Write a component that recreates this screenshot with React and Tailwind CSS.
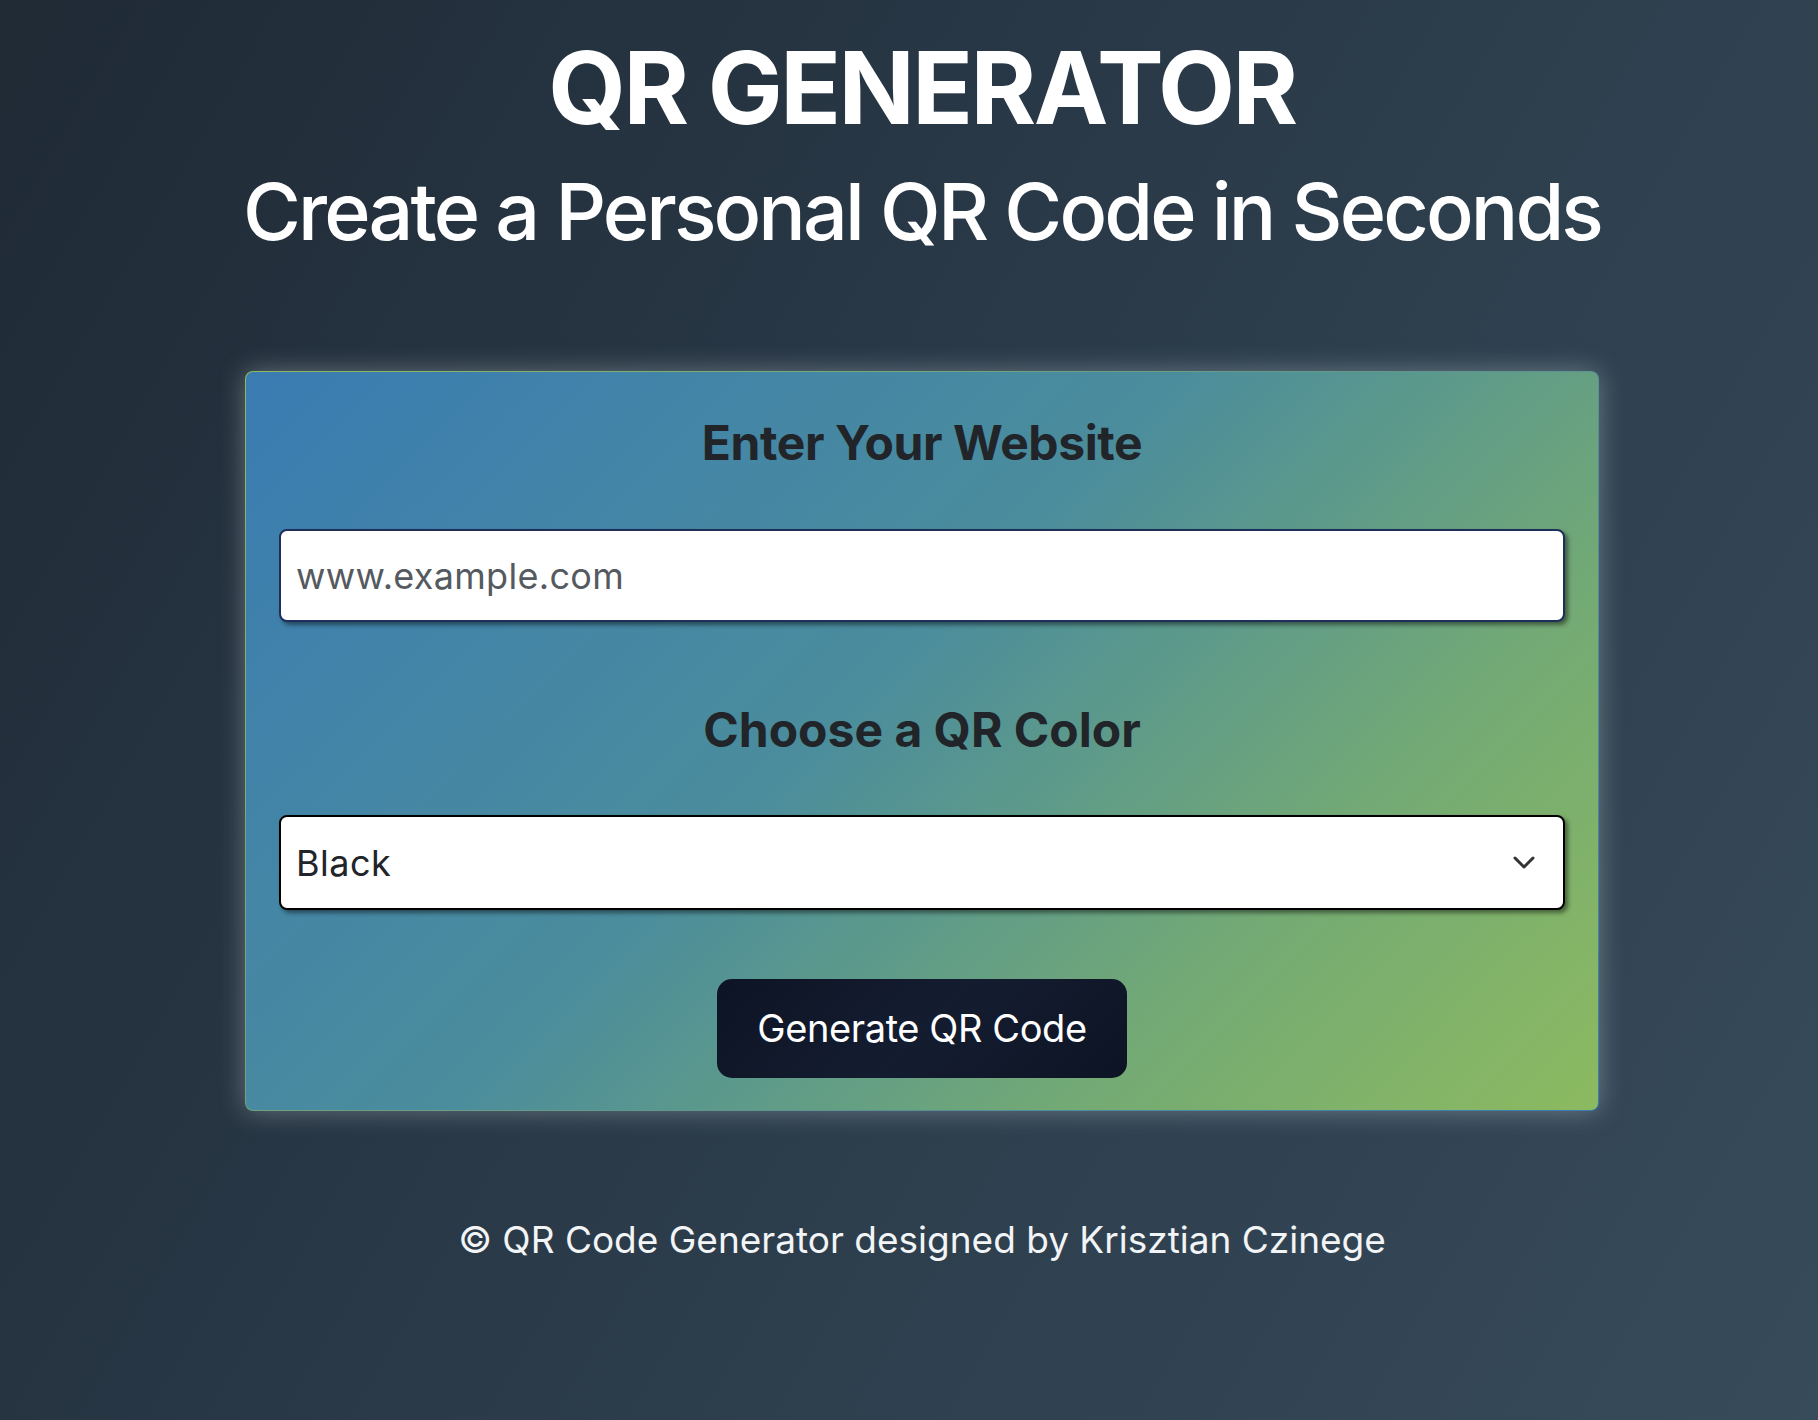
import React from 'react';

const App = () => {
  return (
    <div className="min-h-screen bg-[linear-gradient(120deg,#1f2a35_0%,#2b3b4a_50%,#374b5a_100%)] font-['Inter','Noto_Sans',sans-serif] text-white">
      <div className="flex flex-col items-center pl-[26px] pt-[38px]">
        <h1 className="text-[100px] leading-[100px] font-bold tracking-[-2.5px]">QR GENERATOR</h1>
        <h2 className="mt-[34px] text-[79px] leading-[79px] font-medium tracking-[-2.9px]">Create a Personal QR Code in Seconds</h2>

        <div className="mt-[120px] w-[1354px] rounded-lg border border-transparent [background:linear-gradient(135deg,#3a7cb2,#4b8d9c_45%,#74aa74_75%,#8cba60)_padding-box,linear-gradient(135deg,#8cba60,#3a7cb2)_border-box] shadow-[0_0_26px_rgba(220,225,230,0.35)] px-[33px] pt-[47px] pb-[32px] flex flex-col items-center">
          <h3 className="text-[48px] leading-[48px] font-bold tracking-[-0.4px] text-[#212529]">Enter Your Website</h3>
          <input
            type="text"
            placeholder="www.example.com"
            className="mt-[62px] w-full h-[93px] rounded-lg border-2 border-[#1e2f5a] bg-white px-[15px] text-[36px] tracking-[0.3px] text-[#222] placeholder:text-[#555a60] shadow-[3px_3px_4px_rgba(0,0,0,0.45)] outline-none"
          />

          <h3 className="mt-[84px] text-[48px] leading-[48px] font-bold text-[#212529]">Choose a QR Color</h3>
          <div className="mt-[61px] w-full h-[95px] rounded-lg border-2 border-black bg-white px-[15px] flex items-center justify-between shadow-[3px_3px_4px_rgba(0,0,0,0.45)]">
            <span className="text-[36px] tracking-[0.5px] text-[#212529]">Black</span>
            <svg width="22" height="14" viewBox="0 0 22 14" className="mr-[13px]" fill="none" stroke="#333" strokeWidth="3" strokeLinecap="round" strokeLinejoin="round">
              <path d="M2 2l9 9 9-9" />
            </svg>
          </div>

          <button className="mt-[69px] w-[410px] h-[99px] rounded-[15px] bg-[linear-gradient(135deg,#0d1424,#141c30,#0d1424)] text-[38px] tracking-[-0.4px] text-white">
            Generate QR Code
          </button>
        </div>

        <footer className="mt-[110px] text-[37px] leading-[37px] text-[#f2f4f6]">
          © QR Code Generator designed by Krisztian Czinege
        </footer>
      </div>
    </div>
  );
};

export default App;
